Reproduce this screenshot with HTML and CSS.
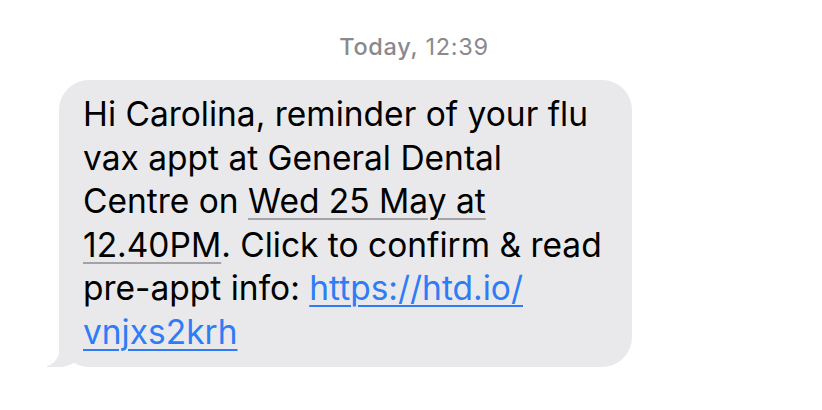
FILE: index.html
```html
<!DOCTYPE html>
<html lang="en">
<head>
    <meta charset="utf-8" />
    <title>Message</title>
    <link rel="stylesheet" href="styles.css">
</head>
<body>
    <div class="thread">
        <div class="stamp"><b>Today,</b> 12:39</div>

        <div class="bubble">
            Hi Carolina, reminder of your flu<br />
            vax appt at General Dental<br />
            Centre on <span class="date">Wed 25 May at<br />
            12.40PM</span>. Click to confirm &amp; read<br />
            pre-appt info: <a href="#" class="link">https://htd.io/<br />
            vnjxs2krh</a>
        </div>
    </div>
</body>
</html>
```

FILE: styles.css
```css
body,
div,
span,
a {
    margin: 0;
    padding: 0
}

body {
    background: #fff;
    font-family: Inter, "Liberation Sans", sans-serif;
    color: #000
}

a {
    text-decoration: none
}

.thread {
    width: 822px;
    height: 410px;
    padding-top: 34px;
    box-sizing: border-box
}

.stamp {
    text-align: center;
    font-size: 23.5px;
    line-height: 26px;
    letter-spacing: 0.7px;
    color: #8a8a8e;
    padding-left: 6px
}
.stamp b{font-weight: 500}

.bubble {
    position: relative;
    box-sizing: border-box;
    width: 573px;
    margin: 20px 0 0 59px;
    padding: 13px 10px 13px 24px;
    background: #e9e9eb;
    border-radius: 30px;
    font-size: 33.5px;
    line-height: 43.5px
}

/* tail */
.bubble::before {
    content: "";
    position: absolute;
    left: -12px;
    bottom: 0;
    width: 36px;
    height: 34px;
    background: #e9e9eb;
    border-bottom-right-radius: 24px 20px
}
.bubble::after {
    content: "";
    position: absolute;
    left: -30px;
    bottom: 0;
    width: 30px;
    height: 34px;
    background: #fff;
    border-bottom-right-radius: 18px 16px
}

.date {
    text-decoration: underline;
    text-decoration-color: #a3a3a7;
    text-decoration-thickness: 2px;
    text-underline-offset: 5px
}

.link {
    color: #2f7cf6;
    text-decoration: underline;
    text-decoration-thickness: 2px;
    text-underline-offset: 5px
}
```
